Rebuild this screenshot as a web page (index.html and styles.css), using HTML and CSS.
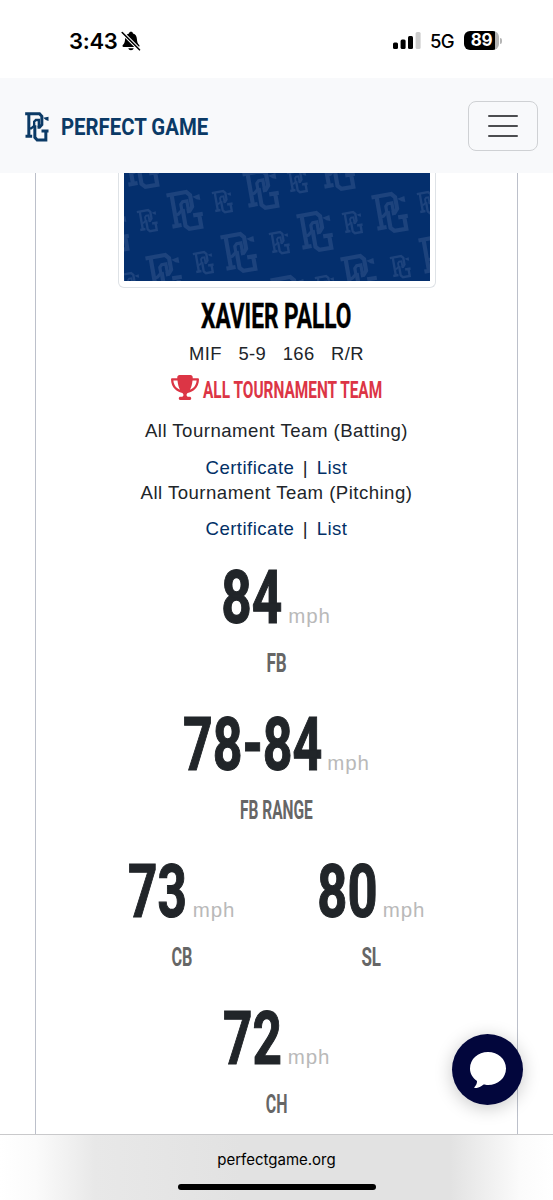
FILE: index.html
```html
<!DOCTYPE html>
<html lang="en">
<head>
<meta charset="utf-8">
<title>Perfect Game - Xavier Pallo</title>
<link rel="stylesheet" href="styles.css">
</head>
<body>
<svg class="defs" aria-hidden="true">
  <symbol id="mark" viewBox="0 0 71 90" overflow="visible">
    <g fill="none" stroke="currentColor" stroke-width="9">
      <path d="M0 5H43L50 13V38L43 46H37"/>
      <path d="M11 5V73M1 73H21"/>
      <path d="M29 40V76L36 84H62V57M49 57H70"/>
      <path d="M11 49H18L27 42V29L32 24H41V44" stroke-width="7"/>
    </g>
    <path d="M54 17L70 14V27L62 24Z" fill="currentColor"/>
  </symbol>
</svg>

<header class="status">
  <div class="clock">
    <span>3:43</span>
    <svg class="bell" viewBox="0 0 20 20">
      <path d="M10 .8c1.2 0 1.8.7 2 1.6 2.700.8 3.800 2.900 3.900 5.600.1 3.300.9 4.500 2.300 6 .7.8.3 2-.8 2H2.600c-1.100 0-1.500-1.200-.8-2 1.400-1.500 2.200-2.700 2.300-6C4.200 5.300 5.300 3.200 8 2.400c.2-.9.800-1.600 2-1.600zM7.300 17.200h5.400c-.3 1.300-1.300 2-2.700 2s-2.400-.7-2.700-2z"/>
      <path d="M1.500 1.800L18 18.300" stroke="#fff" stroke-width="3.600"/>
      <path d="M1.200 1.500L18.500 18.800" stroke="#000" stroke-width="1.600" stroke-linecap="round"/>
    </svg>
  </div>
  <div class="signals">
    <svg class="bars" viewBox="0 0 28 17">
      <rect x="0" y="10.500" width="5" height="6.500" rx="1.500"/>
      <rect x="7.600" y="7.500" width="5" height="9.500" rx="1.500"/>
      <rect x="15" y="4" width="5" height="13" rx="1.500"/>
      <rect x="22.600" y="0" width="5" height="17" rx="1.500" fill="#ccc"/>
    </svg>
    <span class="net">5G</span>
    <div class="battery"><span>89</span></div>
    <i class="tip"></i>
  </div>
</header>

<nav class="nav">
  <div class="brand">
    <svg class="mark"><use href="#mark"/></svg>
    <svg class="word" width="150" height="30"><text x="1" y="23" textLength="155" lengthAdjust="spacingAndGlyphs">PERFECT GAME</text></svg>
  </div>
  <button class="toggle" aria-label="Menu"><i></i><i></i><i></i></button>
</nav>

<main class="page">
  <section class="card">
    <div class="photo">
      <svg width="306" height="108" viewBox="124 173 306 108">
        <defs>
          <g id="big"><use href="#mark" x="-17" y="-21" width="34" height="42" transform="rotate(-10)"/></g>
          <g id="small"><use href="#mark" x="-9.500" y="-12" width="19" height="24" transform="rotate(-10)"/></g>
        </defs>
        <use href="#big" x="142" y="169"/><use href="#big" x="186" y="211"/><use href="#big" x="262" y="190"/>
        <use href="#big" x="240" y="253"/><use href="#big" x="165" y="274"/><use href="#big" x="112" y="233"/>
        <use href="#big" x="316" y="232"/><use href="#big" x="391" y="213"/><use href="#big" x="360" y="275"/>
        <use href="#big" x="338" y="171"/><use href="#big" x="438" y="256"/><use href="#big" x="290" y="296"/>
        <use href="#small" x="148" y="221"/><use href="#small" x="223" y="202"/><use href="#small" x="204" y="263"/>
        <use href="#small" x="280" y="243"/><use href="#small" x="131" y="284"/><use href="#small" x="298" y="182"/>
        <use href="#small" x="353" y="223"/><use href="#small" x="401" y="267"/><use href="#small" x="428" y="203"/>
        <use href="#small" x="326" y="287"/>
      </svg>
    </div>

    <svg class="name narrow" width="152" height="53"><text x="0" y="40" textLength="215" lengthAdjust="spacingAndGlyphs">XAVIER PALLO</text></svg>
    <div class="bio"><span>MIF</span><span>5-9</span><span>166</span><span>R/R</span></div>

    <div class="award">
      <svg class="trophy" viewBox="0 0 576 512"><path d="M400 0H176c-26.500 0-48.100 21.800-47.100 48.200c.2 5.300 .4 10.600 .7 15.800H24C10.700 64 0 74.700 0 88c0 92.600 33.500 157 78.500 200.700c44.300 43.100 98.300 64.800 138.100 75.800c23.400 6.500 39.400 26 39.400 45.600c0 20.900-17 37.900-37.900 37.900H192c-17.700 0-32 14.300-32 32s14.300 32 32 32H384c17.700 0 32-14.300 32-32s-14.300-32-32-32H357.900C337 448 320 431 320 410.100c0-19.600 15.900-39.200 39.400-45.600c39.900-11 93.900-32.700 138.200-75.800C542.500 245 576 180.600 576 88c0-13.300-10.700-24-24-24H446.400c.3-5.200 .5-10.400 .7-15.800C448.100 21.800 426.500 0 400 0zM48.900 112h84.400c9.100 90.100 29.200 150.300 51.900 190.600c-24.900-11-50.800-26.500-73.200-48.300c-32-31.100-58-76-63-142.300zM464.100 254.300c-22.400 21.800-48.300 37.300-73.200 48.300c22.700-40.300 42.800-100.500 51.900-190.600h84.400c-5.100 66.300-31.100 111.200-63 142.300z"/></svg>
      <svg class="award-title narrow" width="180" height="32"><text x="0" y="25" textLength="256" lengthAdjust="spacingAndGlyphs">ALL TOURNAMENT TEAM</text></svg>
    </div>

    <div class="honor">
      <p>All Tournament Team (Batting)</p>
      <div class="links"><a>Certificate</a><b>|</b><a>List</a></div>
    </div>
    <div class="honor">
      <p>All Tournament Team (Pitching)</p>
      <div class="links"><a>Certificate</a><b>|</b><a>List</a></div>
    </div>

    <div class="stats">
      <div class="stat">
        <div class="value narrow"><svg width="62" height="90"><text x="-1" y="70" textLength="87" lengthAdjust="spacingAndGlyphs">84</text></svg><span>mph</span></div>
        <svg class="label narrow" width="24" height="32"><text x="2" y="24" textLength="29" lengthAdjust="spacingAndGlyphs">FB</text></svg>
      </div>
      <div class="stat">
        <div class="value narrow"><svg width="140" height="90"><text x="0" y="70" textLength="199" lengthAdjust="spacingAndGlyphs">78-84</text></svg><span>mph</span></div>
        <svg class="label narrow" width="74" height="32"><text x="0" y="24" textLength="104" lengthAdjust="spacingAndGlyphs">FB RANGE</text></svg>
      </div>
      <div class="pair">
        <div class="stat">
          <div class="value narrow"><svg width="61" height="90"><text x="0" y="70" textLength="84" lengthAdjust="spacingAndGlyphs">73</text></svg><span>mph</span></div>
          <svg class="label narrow" width="24" height="32"><text x="2" y="24" textLength="30" lengthAdjust="spacingAndGlyphs">CB</text></svg>
        </div>
        <div class="stat">
          <div class="value narrow"><svg width="61" height="90"><text x="-1" y="70" textLength="86" lengthAdjust="spacingAndGlyphs">80</text></svg><span>mph</span></div>
          <svg class="label narrow" width="24" height="32"><text x="2" y="24" textLength="28" lengthAdjust="spacingAndGlyphs">SL</text></svg>
        </div>
      </div>
      <div class="stat">
        <div class="value narrow"><svg width="61" height="90"><text x="0" y="70" textLength="84" lengthAdjust="spacingAndGlyphs">72</text></svg><span>mph</span></div>
        <svg class="label narrow" width="24" height="32"><text x="1" y="24" textLength="31" lengthAdjust="spacingAndGlyphs">CH</text></svg>
      </div>
    </div>
  </section>
</main>

<footer class="browser"><span>perfectgame.org</span><i></i></footer>

<button class="chat" aria-label="Chat">
  <svg viewBox="0 0 36 36"><path d="M18 0c10 0 18 7 18 16.500S28 33 18 33c-1.800 0-3-.2-4.500-.5-2.500 2.300-5.500 3.500-8.500 3.700-.8 0-.9-.8-.4-1.300C6.300 33.200 7 31.300 7 29 2.700 26 0 21.800 0 16.500 0 7 8 0 18 0z"/></svg>
</button>
</body>
</html>
```
FILE: styles.css
```css
* { box-sizing: border-box; }
body {
  margin: 0; width: 553px; height: 1200px; overflow: hidden; position: relative;
  display: flex; flex-direction: column; background: #fff; color: #212529;
  font-family: "Liberation Sans", Arial, sans-serif; font-size: 18.4px;
}
svg { display: block; flex: none; }
svg text { font-family: Roboto, sans-serif; font-weight: 700; }
.narrow text { transform: scaleX(.7); }
.narrow svg, svg.narrow { overflow: visible; }
button { padding: 0; background: none; border: 0; }
.defs { width: 0; height: 0; position: absolute; }

.status {
  height: 78px; flex: none; padding: 8px 51px 0 69px; color: #000;
  display: flex; justify-content: space-between; align-items: center;
  font-family: Inter, sans-serif;
}
.clock { display: flex; align-items: center; gap: 4px; font-size: 22px; font-weight: 600; letter-spacing: -.3px; }
.clock, .signals { height: 24px; margin-top: -5px; }
.bell { width: 20px; height: 20px; }
.signals { display: flex; align-items: center; }
.bars { width: 28px; height: 17px; }
.net { margin: 0 10px 0 9px; font-size: 18.500px; font-weight: 500; letter-spacing: -.6px; }
.battery {
  width: 35px; height: 19px; border-radius: 6px; color: #fff;
  background: linear-gradient(90deg, #000 31px, #b5b5b5 31px);
  font-size: 17px; font-weight: 700; line-height: 19px; text-align: center; letter-spacing: -.3px;
}
.tip { width: 2px; height: 6px; margin-left: 1px; border-radius: 0 2px 2px 0; background: #b5b5b5; }

.nav {
  height: 95px; flex: none; padding: 0 15px 0 25px; background: #f8f9fb;
  display: flex; align-items: center; justify-content: space-between;
}
.brand { display: flex; align-items: center; gap: 11px; color: #0b3a66; padding-top: 2px; }
.mark { width: 24px; height: 30px; }
.word { overflow: visible; }
.word text { font-size: 23px; fill: #0b3a66; transform: scaleX(.95); }
.toggle {
  width: 70px; height: 50px; border: 1.500px solid #cfd1d4; border-radius: 8px;
  display: flex; flex-direction: column; align-items: center; justify-content: center; gap: 8px;
}
.toggle i { width: 30px; height: 2px; background: #4c4d50; border-radius: 1px; }

.page { height: 961px; flex: none; padding: 0 35px; }
.card {
  height: 100%; border: solid #bcc0ca; border-width: 0 1.500px;
  display: flex; flex-direction: column; align-items: center;
}
.photo {
  width: 318px; height: 115px; padding: 0 5px 5px; flex: none; background: #fff;
  border: 1px solid #dee2e6; border-top: 0; border-radius: 0 0 6px 6px;
}
.photo svg { background: #042f6d; color: #1d437d; }
.name text { font-size: 35px; fill: #000; stroke: #000; stroke-width: .4px; }
.bio { height: 25px; flex: none; line-height: 25px; display: flex; gap: 16.500px; letter-spacing: .4px; }
.award { height: 52px; flex: none; display: flex; align-items: center; gap: 4px; color: #dc3545; padding-bottom: 7px; }
.trophy { width: 28px; height: 25px; margin-bottom: 2px; fill: currentColor; }
.award-title text { font-size: 24px; fill: currentColor; }
.honor { height: 61.500px; text-align: center; font-size: 18.600px; letter-spacing: .47px; line-height: 25px; flex: none; }
.honor p { margin: 0 0 11.500px; }
.links { display: flex; justify-content: center; gap: 8.500px; }
.links a { color: #022f66; }
.links b { font-weight: 400; }

.stats { width: 380px; padding-top: 12px; }
.stat { height: 147px; display: flex; flex-direction: column; align-items: center; }
.pair { display: grid; grid-template-columns: 1fr 1fr; }
.value { height: 95px; display: flex; align-items: flex-start; gap: 4px; }
.value text { font-size: 74px; fill: #212529; stroke: #212529; stroke-width: 1.200px; }
.value span { margin-top: 50px; line-height: 25px; font-size: 20.500px; letter-spacing: .9px; color: #b9b9b9; }
.label text { font-size: 25px; fill: #666; }

.browser {
  height: 66px; flex: none; border-top: 1.500px solid #c9c9cb; color: #000;
  background: linear-gradient(90deg, #fff 0, #fbfbfb 35px, #e8e8e8 95px, #e2e2e2 240px, #e2e2e2 450px, #fbfbfb 520px, #fff);
  display: flex; flex-direction: column; align-items: center; padding-top: 14px;
  font: 400 15px/21px Inter, sans-serif;
}
.browser i { width: 198px; height: 6px; margin-top: 14px; border-radius: 4px; background: #000; }

.chat {
  position: absolute; left: 452px; top: 1034px; width: 71px; height: 71px; border-radius: 50%;
  background: #02063c; box-shadow: 0 3px 18px rgba(0, 0, 0, .22);
  display: flex; align-items: center; justify-content: center;
}
.chat svg { width: 36px; height: 36px; fill: #fff; }
```
